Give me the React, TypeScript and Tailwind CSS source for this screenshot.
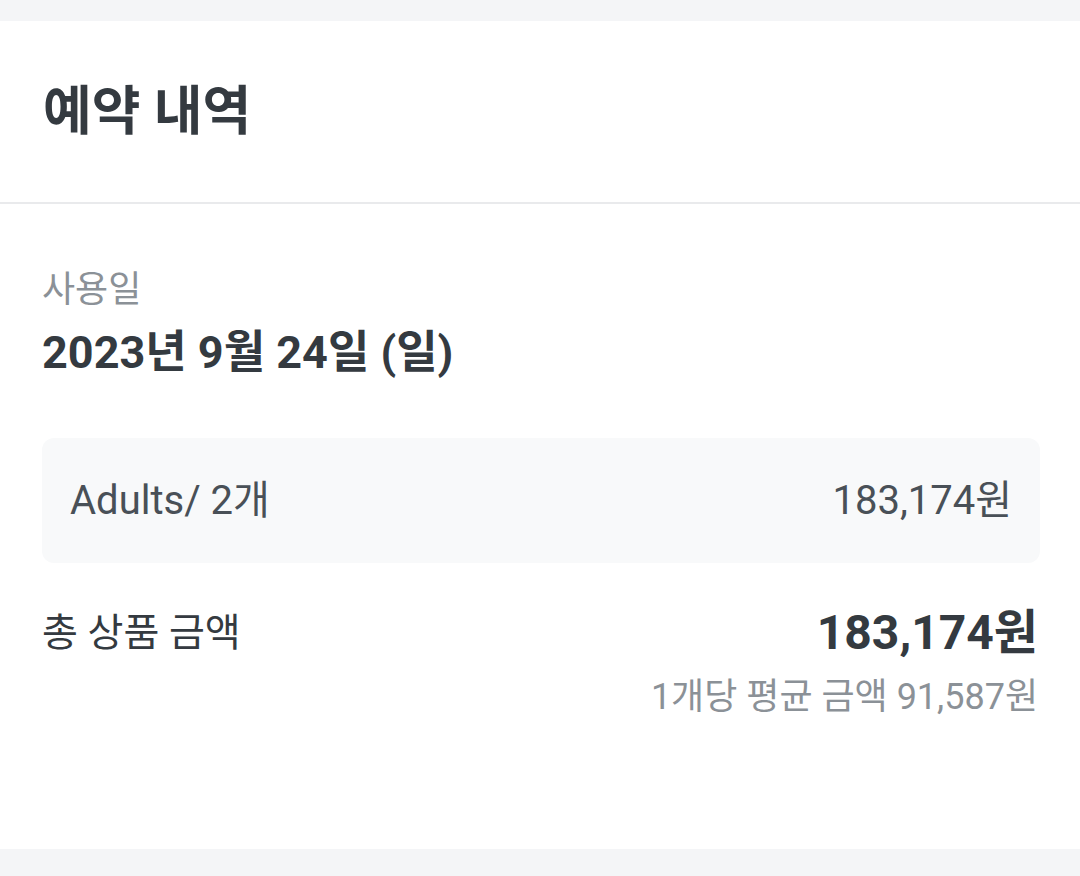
export default function App() {
  return (
    <div
      className="w-[1080px] h-[876px] bg-white flex flex-col overflow-hidden"
      style={{ fontFamily: 'Roboto, "Noto Sans CJK KR", sans-serif' }}
    >
      <div className="h-[21px] bg-[#f4f5f7] shrink-0" />

      <div className="h-[181px] flex items-center px-[43px] shrink-0">
        <h1 className="text-[53px] font-bold text-[#343a40] leading-none mt-[2px]">예약 내역</h1>
      </div>
      <div className="h-[2px] bg-[#e9eaec] shrink-0" />

      <div className="flex-1 pl-[42px] pr-[40px] pt-[62px]">
        <div className="text-[36px] text-[#8b9197] leading-[48px]">사용일</div>
        <div className="text-[45px] font-bold text-[#343a40] leading-[56px] mt-[11px]">
          2023년 9월 24일 (일)
        </div>

        <div className="mt-[57px] h-[125px] rounded-[12px] bg-[#f8f9fa] flex items-center justify-between pl-[28px] pr-[28px] text-[40px] text-[#495057]">
          <span>Adults/ 2개</span>
          <span>183,174원</span>
        </div>

        <div className="mt-[42px] flex justify-between items-start">
          <span className="text-[39px] text-[#343a40] leading-[56px]">총 상품 금액</span>
          <div className="flex flex-col items-end">
            <span className="text-[48px] font-bold text-[#343a40] leading-[56px] mr-[2px]">183,174원</span>
            <span className="text-[36px] text-[#8b9197] leading-[48px] mt-[12px] mr-[2px]">1개당 평균 금액 91,587원</span>
          </div>
        </div>
      </div>

      <div className="h-[27px] bg-[#f4f5f7] shrink-0" />
    </div>
  );
}
